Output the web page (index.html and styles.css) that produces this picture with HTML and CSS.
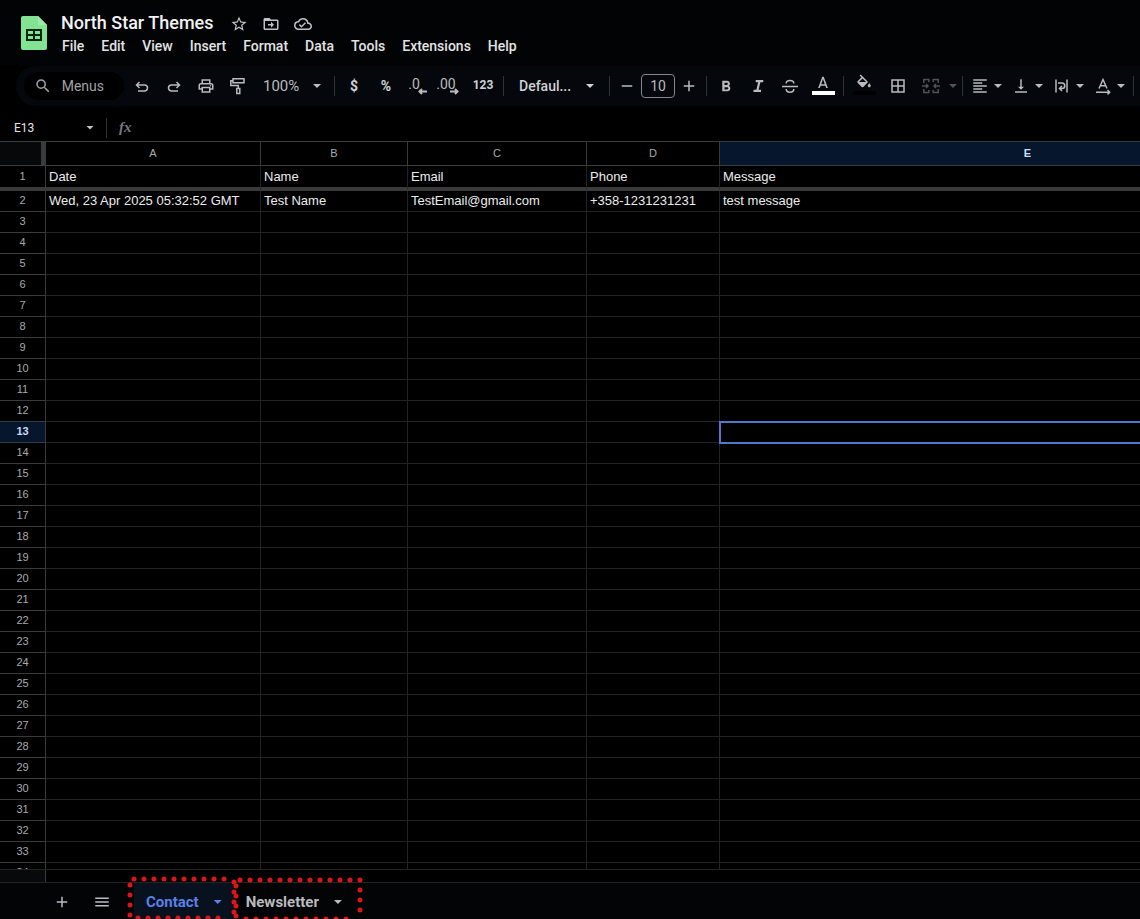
FILE: index.html
```html
<!DOCTYPE html>
<html lang="en">
<head>
    <meta charset="UTF-8">
    <meta name="viewport" content="width=device-width, initial-scale=1.0">
    <title>North Star Themes</title>
    <link rel="stylesheet" href="styles.css">
</head>
<body>

<header class="doc-header">
    <svg class="logo" viewBox="0 0 26 34" aria-hidden="true">
        <path fill="#82e493" d="M2 0h15l9 9v23a2 2 0 0 1-2 2H2a2 2 0 0 1-2-2V2a2 2 0 0 1 2-2z"/>
        <path fill="#9aeba8" d="M17 0l9 9h-9z"/>
        <path fill="none" stroke="#0b2410" stroke-width="2" d="M6 14h14v10H6zM6 19h14M13 14v10"/>
    </svg>
    <div class="doc-info">
        <div class="title-row">
            <h1>North Star Themes</h1>
            <button class="title-button" aria-label="Star">
                <svg viewBox="0 0 24 24"><path d="M22 9.24l-7.19-.62L12 2 9.19 8.63 2 9.24l5.46 4.73L5.82 21 12 17.27 18.18 21l-1.63-7.03L22 9.24zM12 15.4l-3.76 2.27 1-4.28-3.32-2.88 4.38-.38L12 6.1l1.71 4.04 4.38.38-3.32 2.88 1 4.28L12 15.4z"/></svg>
            </button>
            <button class="title-button" aria-label="Move">
                <svg viewBox="0 0 24 24"><path d="M20 6h-8l-2-2H4c-1.1 0-2 .9-2 2v12c0 1.1.9 2 2 2h16c1.1 0 2-.9 2-2V8c0-1.1-.9-2-2-2zm0 12H4V8h16v10zm-8-1l4-4-4-4v3H8v2h4z"/></svg>
            </button>
            <button class="title-button" aria-label="Saved to Drive">
                <svg viewBox="0 0 24 24"><path d="M19.35 10.04A7.49 7.49 0 0 0 12 4C9.11 4 6.6 5.64 5.35 8.04A5.994 5.994 0 0 0 0 14c0 3.31 2.69 6 6 6h13c2.76 0 5-2.24 5-5 0-2.64-2.05-4.78-4.65-4.96zM19 18H6c-2.21 0-4-1.79-4-4 0-2.05 1.53-3.76 3.56-3.97l1.07-.11.5-.95A5.469 5.469 0 0 1 12 6c2.62 0 4.88 1.86 5.39 4.43l.3 1.5 1.53.11A2.98 2.98 0 0 1 22 15c0 1.65-1.35 3-3 3zm-9-3.82l-2.09-2.09L6.5 13.5 10 17l6.01-6.01-1.41-1.41z"/></svg>
            </button>
        </div>
        <nav class="menu-bar">
            <button>File</button>
            <button>Edit</button>
            <button>View</button>
            <button>Insert</button>
            <button>Format</button>
            <button>Data</button>
            <button>Tools</button>
            <button>Extensions</button>
            <button>Help</button>
        </nav>
    </div>
</header>

<div class="toolbar">
    <button class="menus-button">
        <svg viewBox="0 0 24 24"><path d="M15.5 14h-.79l-.28-.27A6.47 6.47 0 0 0 16 9.5 6.5 6.5 0 1 0 9.5 16c1.61 0 3.09-.59 4.23-1.57l.27.28v.79l5 4.99L20.49 19l-4.99-5zm-6 0C7.01 14 5 11.99 5 9.5S7.01 5 9.5 5 14 7.01 14 9.5 11.99 14 9.5 14z"/></svg>
        Menus
    </button>
    <button class="tool" aria-label="Undo">
        <svg viewBox="0 0 18 18" class="line"><path d="M6.500 5L3.500 8l3 3M4 8h7.500a3 3 0 0 1 0 6H5"/></svg>
    </button>
    <button class="tool" aria-label="Redo">
        <svg viewBox="0 0 18 18" class="line"><path d="M11.500 5l3 3-3 3M14 8H6.500a3 3 0 0 0 0 6H13"/></svg>
    </button>
    <button class="tool" aria-label="Print">
        <svg viewBox="0 0 24 24"><path d="M19 8h-1V3H6v5H5c-1.660 0-3 1.340-3 3v6h4v4h12v-4h4v-6c0-1.660-1.340-3-3-3zM8 5h8v3H8V5zm8 12v2H8v-4h8v2zm2-2v-2H6v2H4v-4c0-.55.45-1 1-1h14c.55 0 1 .45 1 1v4h-2z"/><circle cx="18" cy="11.500" r="1"/></svg>
    </button>
    <button class="tool" aria-label="Paint format">
        <svg viewBox="0 0 18 18" class="line"><path d="M4 1.800h11v4H4zM4 3.800H1.800v4.700h7.500v3M7.800 11.500h3v5h-3z"/></svg>
    </button>
    <span class="select-box zoom-box">
        <select aria-label="Zoom"><option>100%</option></select>
        <span class="caret"></span>
    </span>
    <span class="divider"></span>
    <button class="tool bold">$</button>
    <button class="tool bold">%</button>
    <button class="tool decimal" aria-label="Decrease decimal places">.0
        <svg viewBox="0 0 9 7"><path d="M9 3.500H1.500M4 1L1.500 3.500 4 6"/></svg>
    </button>
    <button class="tool decimal" aria-label="Increase decimal places">.00
        <svg viewBox="0 0 9 7"><path d="M0 3.500h7.500M5 1l2.500 2.500L5 6"/></svg>
    </button>
    <button class="tool wide bold number-format">123</button>
    <span class="divider"></span>
    <span class="select-box font-box">
        <select aria-label="Font"><option>Defaul...</option></select>
        <span class="caret"></span>
    </span>
    <span class="divider"></span>
    <button class="tool step" aria-label="Decrease font size">
        <svg viewBox="0 0 24 24"><path d="M5 11h14v2H5z"/></svg>
    </button>
    <input class="font-size" type="text" value="10" aria-label="Font size">
    <button class="tool step" aria-label="Increase font size">
        <svg viewBox="0 0 24 24"><path d="M19 13h-6v6h-2v-6H5v-2h6V5h2v6h6z"/></svg>
    </button>
    <span class="divider"></span>
    <button class="tool" aria-label="Bold">
        <svg viewBox="0 0 24 24"><path d="M15.600 11.790c.970-.670 1.650-1.770 1.650-2.790 0-2.260-1.750-4-4-4H7v14h7.040c2.090 0 3.710-1.700 3.710-3.790 0-1.520-.860-2.820-2.150-3.420zM10 7.500h3c.830 0 1.500.670 1.500 1.500s-.670 1.500-1.500 1.500h-3v-3zm3.500 9H10v-3h3.500c.830 0 1.500.670 1.500 1.500s-.670 1.500-1.500 1.500z"/></svg>
    </button>
    <button class="tool" aria-label="Italic">
        <svg viewBox="0 0 24 24"><path d="M9 4v3h3.200l-2.400 10H6v3h10v-3h-3.200l2.400-10H19V4z"/></svg>
    </button>
    <button class="tool" aria-label="Strikethrough">
        <svg viewBox="0 0 18 18" class="line"><path d="M1 9.500h16M12.800 6.500C12.800 4.500 11 3.500 9 3.500S5.200 4.500 5.200 6.500M5.200 12c0 2 1.800 3.200 3.800 3.200s3.800-1.200 3.800-3.200"/></svg>
    </button>
    <button class="tool wide swatch text-swatch" aria-label="Text color">
        <svg viewBox="0 0 24 24"><path d="M11 5L5.500 20h2.250l1.120-3h6.250l1.120 3h2.250L13 5h-2zm-1.380 10L12 8 14.380 15H9.620z"/></svg>
    </button>
    <span class="divider"></span>
    <button class="tool wide swatch fill-swatch" aria-label="Fill color">
        <svg viewBox="0 0 24 24"><path d="M16.560 10.940L7.620 2 6.210 3.410l2.380 2.380-5.150 5.150a1.490 1.490 0 0 0 0 2.120l5.500 5.500c.290.290.680.440 1.060.440s.770-.150 1.060-.440l5.500-5.500c.590-.580.590-1.530 0-2.120zM5.210 12L10 7.210 14.790 12H5.210zM19 13.500s-2 2.170-2 3.500c0 1.100.9 2 2 2s2-.9 2-2c0-1.330-2-3.500-2-3.500z"/></svg>
    </button>
    <button class="tool wide" aria-label="Borders">
        <svg viewBox="0 0 24 24"><path d="M3 3v18h18V3H3zm8 16H5v-6h6v6zm0-8H5V5h6v6zm8 8h-6v-6h6v6zm0-8h-6V5h6v6z"/></svg>
    </button>
    <span class="merge-group">
        <button class="tool" aria-label="Merge cells">
            <svg viewBox="0 0 18 18" class="line"><path d="M1.800 6V2.500h5V5M1.800 12v3.500h5V13M16.200 6V2.500h-5V5M16.200 12v3.500h-5V13M0 9h6M4 7l2 2-2 2M18 9h-6M14 7l-2 2 2 2"/></svg>
        </button>
        <button class="caret-button" aria-label="Merge options"><span class="caret"></span></button>
    </span>
    <span class="divider"></span>
    <button class="drop-tool" aria-label="Horizontal align">
        <svg viewBox="0 0 24 24"><path d="M3 3h18v2H3zM3 7h12v2H3zM3 11h18v2H3zM3 15h12v2H3zM3 19h18v2H3z"/></svg>
        <span class="caret"></span>
    </button>
    <button class="drop-tool" aria-label="Vertical align">
        <svg viewBox="0 0 24 24"><path d="M16 13h-3V3h-2v10H8l4 4 4-4zM4 19v2h16v-2H4z"/></svg>
        <span class="caret"></span>
    </button>
    <button class="drop-tool" aria-label="Text wrapping">
        <svg viewBox="0 0 18 18" class="line"><path d="M3 2.500v13M14 2.500v13M5 6h4a2.700 2.700 0 0 1 0 5.500H7M9 9l-2.500 2.500L9 14"/></svg>
        <span class="caret"></span>
    </button>
    <button class="drop-tool" aria-label="Text rotation">
        <svg viewBox="0 0 18 18" class="line"><path d="M5 11.500L9 2.500l4 9M6.300 8.800h5.400M2 15.200h13.500M13.500 13l2.200 2.200-2.200 2.200"/></svg>
        <span class="caret"></span>
    </button>
    <span class="divider"></span>
</div>

<div class="formula-bar">
    <input class="name-box" type="text" value="E13" aria-label="Name box">
    <span class="caret"></span>
    <span class="divider"></span>
    <label class="fx" for="formula">fx</label>
    <input class="formula" id="formula" type="text">
</div>

<main class="sheet">
    <table>
        <colgroup>
            <col class="col-num">
            <col class="col-a">
            <col class="col-b">
            <col class="col-c">
            <col class="col-d">
            <col class="col-e">
        </colgroup>
        <thead>
            <tr>
                <th class="corner"></th>
                <th>A</th>
                <th>B</th>
                <th>C</th>
                <th>D</th>
                <th class="active">E</th>
            </tr>
        </thead>
        <tbody id="rows">
            <tr class="frozen">
                <th>1</th>
                <td>Date</td>
                <td>Name</td>
                <td>Email</td>
                <td>Phone</td>
                <td>Message</td>
            </tr>
            <tr>
                <th>2</th>
                <td>Wed, 23 Apr 2025 05:32:52 GMT</td>
                <td>Test Name</td>
                <td>TestEmail@gmail.com</td>
                <td>+358-1231231231</td>
                <td>test message</td>
            </tr>
        </tbody>
    </table>
</main>

<div class="scroll-strip"></div>

<footer class="tab-bar">
    <button class="tab-tool" aria-label="Add sheet">
        <svg viewBox="0 0 24 24"><path d="M19 13h-6v6h-2v-6H5v-2h6V5h2v6h6z"/></svg>
    </button>
    <button class="tab-tool" aria-label="All sheets">
        <svg viewBox="0 0 24 24"><path d="M3 6h18v2H3zM3 11h18v2H3zM3 16h18v2H3z"/></svg>
    </button>
    <div class="tabs">
        <button class="tab selected">Contact <span class="caret"></span></button>
        <button class="tab">Newsletter <span class="caret"></span></button>
        <svg class="marks" viewBox="0 0 240 44" aria-hidden="true">
            <path d="M8 3h98M4 9v32M108 6v36M12 42h90"/>
            <path d="M114 4h122M110 10v32M234 14v24M120 43h108"/>
        </svg>
    </div>
</footer>

<script>
    const rows = document.getElementById('rows');
    const activeRow = 13;
    const lastRow = 34;

    for (let n = 3; n <= lastRow; n++) {
        const row = document.createElement('tr');
        const head = document.createElement('th');
        head.textContent = n;
        row.appendChild(head);

        for (let c = 0; c < 5; c++) {
            row.appendChild(document.createElement('td'));
        }

        if (n === activeRow) {
            head.className = 'active';
            row.lastChild.className = 'cursor';
        }
        rows.appendChild(row);
    }
</script>

</body>
</html>
```
FILE: styles.css
```css
/* Global Styles */
* {
    box-sizing: border-box;
}

body {
    margin: 0;
    height: 100vh;
    display: flex;
    flex-direction: column;
    overflow: hidden;
    background: #000;
    color: #e3e3e3;
    font-family: Roboto, 'Liberation Sans', sans-serif;
    font-size: 14px;
}

button,
input,
select {
    font: inherit;
    color: inherit;
    background: none;
    border: none;
    margin: 0;
    padding: 0;
    outline: none;
}

button {
    display: flex;
    align-items: center;
    justify-content: center;
    flex-shrink: 0;
    cursor: pointer;
}

svg {
    width: 18px;
    height: 18px;
    fill: currentColor;
    flex-shrink: 0;
}

.line {
    fill: none;
    stroke: currentColor;
    stroke-width: 1.5;
}

.caret {
    flex-shrink: 0;
    width: 8px;
    height: 4px;
    background: currentColor;
    clip-path: polygon(0 0, 100% 0, 50% 100%);
}

.divider {
    flex-shrink: 0;
    width: 1px;
    height: 20px;
    margin: 0 3px;
    background: #303336;
}

/* Title and menus */
.doc-header {
    display: flex;
    flex-shrink: 0;
    height: 66px;
    padding: 12px 21px 0;
    background: #020305;
}

.logo {
    width: 26px;
    height: 34px;
    margin-top: 4px;
}

.doc-info {
    margin-left: 14px;
}

.title-row {
    display: flex;
    align-items: center;
    height: 22px;
}

.title-row h1 {
    margin: 0 10px 0 0;
    font-size: 18px;
    font-weight: 500;
    line-height: 22px;
    color: #f2f2f2;
}

.title-button {
    width: 32px;
    height: 22px;
    padding-top: 2px;
    color: #c0c2c5;
}

.menu-bar {
    display: flex;
    gap: 1px;
    margin-left: -7px;
}

.menu-bar button {
    padding: 0 8px;
    height: 24px;
    font-weight: 500;
}

/* Toolbar */
.toolbar {
    display: flex;
    align-items: center;
    flex-shrink: 0;
    height: 40px;
    margin-left: 16px;
    padding-left: 8px;
    border-radius: 20px 0 0 20px;
    background: #04070b;
    color: #b9bbbe;
    overflow: hidden;
}

.menus-button {
    width: 100px;
    height: 28px;
    margin-right: 2px;
    padding: 0 20px 0 10px;
    justify-content: space-between;
    border-radius: 14px;
    background: #000;
    color: #a0a2a5;
}

.tool {
    position: relative;
    width: 32px;
    height: 28px;
}

.wide {
    width: 34px;
}

.step {
    width: 28px;
}

.bold {
    font-weight: 700;
    color: #d0d2d5;
}

.number-format {
    padding-bottom: 2px;
    font-size: 12px;
}

.decimal svg {
    position: absolute;
    right: 7px;
    bottom: 5px;
    width: 9px;
    height: 7px;
    fill: none;
    stroke: currentColor;
    stroke-width: 2;
}

.decimal {
    padding: 0 8px 4px 0;
}

.select-box {
    display: flex;
    align-items: center;
    flex-shrink: 0;
}

.select-box select {
    flex: 1;
    min-width: 0;
    appearance: none;
}

.zoom-box {
    width: 77px;
    padding: 0 10px 0 9px;
    font-size: 15px;
}

.font-box {
    width: 99px;
    padding: 0 12px;
    font-weight: 500;
    color: #d0d2d5;
}

.font-size {
    flex-shrink: 0;
    width: 34px;
    height: 24px;
    border: 1px solid #85878a;
    border-radius: 4px;
    text-align: center;
}

.swatch {
    flex-direction: column;
    justify-content: flex-start;
    padding-top: 1px;
}

.swatch::after {
    content: '';
    width: 23px;
    height: 4px;
    background: #000;
}

.text-swatch::after {
    background: #fff;
}

.merge-group {
    display: flex;
    flex-shrink: 0;
    color: #505255;
}

.caret-button {
    width: 12px;
}

.drop-tool {
    width: 41px;
    height: 28px;
    justify-content: flex-start;
    gap: 5px;
    padding-left: 5px;
}

/* Name box and formula */
.formula-bar {
    display: flex;
    align-items: center;
    flex-shrink: 0;
    height: 36px;
    padding: 8px 0 0 14px;
    border-bottom: 1px solid #3a3b3d;
    color: #c4c6c9;
}

.name-box {
    width: 72px;
    font-size: 12px;
    color: #e3e3e3;
}

.formula-bar .divider {
    margin: 0 12px;
}

.fx {
    font: italic bold 15px 'Liberation Serif', serif;
    color: #77797c;
}

.formula {
    flex: 1;
    margin-left: 8px;
}

/* Grid */
.sheet {
    flex: 1;
    min-height: 0;
    overflow: hidden;
    font-family: 'Liberation Sans', Arial, sans-serif;
}

.sheet table {
    width: 1336px;
    table-layout: fixed;
    border-collapse: separate;
    border-spacing: 0;
}

.col-num { width: 46px; }
.col-a { width: 215px; }
.col-b { width: 147px; }
.col-c { width: 179px; }
.col-d { width: 133px; }
.col-e { width: 616px; }

.sheet th,
.sheet td {
    height: 21px;
    padding: 0 3px;
    line-height: 20px;
    border-right: 1px solid #222325;
    border-bottom: 1px solid #222325;
    white-space: nowrap;
}

.sheet td {
    font-size: 13px;
    color: #ececec;
}

.sheet th {
    padding: 0 0 2px;
    line-height: 18px;
    font-size: 11px;
    font-weight: 400;
    color: #a8aaad;
    border-color: #3a3b3d;
}

.sheet thead th {
    height: 24px;
}

.sheet .corner {
    background: #06080a;
    box-shadow: inset -4px 0 #3a3b3d;
}

.sheet .frozen th,
.sheet .frozen td {
    height: 25px;
    border-bottom: 4px solid #3a3a3b;
}

.sheet th.active {
    background: #06162c;
    color: #c9dcf7;
    font-weight: 700;
}

.sheet .cursor {
    outline: 2px solid #5079cb;
    outline-offset: -1px;
}

.scroll-strip {
    flex-shrink: 0;
    height: 13px;
    border-top: 1px solid #222325;
    background: linear-gradient(to right, #08090a 45px, #3a3b3d 45px, #3a3b3d 46px, #000 46px);
}

/* Sheet tabs */
.tab-bar {
    display: flex;
    flex-shrink: 0;
    height: 37px;
    padding-left: 42px;
    border-top: 1px solid #222325;
    background: #030405;
    color: #b9bbbe;
}

.tab-tool {
    width: 40px;
    padding-top: 2px;
}

.tabs {
    position: relative;
    display: flex;
    margin-left: 12px;
}

.tab {
    gap: 15px;
    padding: 2px 12px 0;
    font-size: 15px;
    font-weight: 700;
}

.tab.selected {
    background: #08121f;
    color: #5c7fe8;
}

/* Dotted frames over the tabs */
.marks {
    position: absolute;
    left: -8px;
    top: -7px;
    width: 240px;
    height: 44px;
    fill: none;
    stroke: #e01418;
    stroke-width: 5;
    stroke-linecap: round;
    stroke-dasharray: 0 10;
    pointer-events: none;
}
```
